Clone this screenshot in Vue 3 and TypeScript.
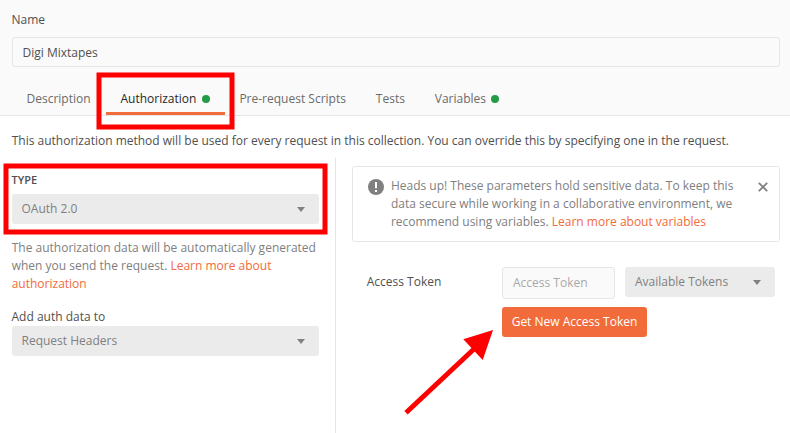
<script setup lang="ts">
import { ref } from 'vue'

interface Tab {
  label: string
  filled?: boolean
}

const tabs: Tab[] = [
  { label: 'Description' },
  { label: 'Authorization', filled: true },
  { label: 'Pre-request Scripts' },
  { label: 'Tests' },
  { label: 'Variables', filled: true },
]
const active = ref('Authorization')
const name = ref('Digi Mixtapes')
const token = ref('')
const showNotice = ref(true)
</script>

<template>
  <div class="page">
    <header class="head">
      <label class="name-label" for="collection-name">Name</label>
      <input id="collection-name" v-model="name" class="input name-input" type="text" />
      <nav class="tabs">
        <button
          v-for="tab in tabs"
          :key="tab.label"
          class="tab"
          :class="{ active: tab.label === active }"
          @click="active = tab.label"
        >
          <span>{{ tab.label }}</span>
          <i v-if="tab.filled" class="dot"></i>
        </button>
      </nav>
    </header>

    <p class="intro">This authorization method will be used for every request in this collection. You can override this by specifying one in the request.</p>

    <main class="body">
      <section class="left">
        <h2 class="type">TYPE</h2>
        <div class="select">
          <span>OAuth 2.0</span>
          <svg class="caret" width="8" height="5" viewBox="0 0 8 5"><path d="M0 0h8L4 5z" /></svg>
        </div>
        <p class="hint">The authorization data will be automatically generated when you send the request. <a>Learn more about authorization</a></p>
        <div class="add-label">Add auth data to</div>
        <div class="select">
          <span>Request Headers</span>
          <svg class="caret" width="8" height="5" viewBox="0 0 8 5"><path d="M0 0h8L4 5z" /></svg>
        </div>
      </section>

      <section class="right">
        <div v-if="showNotice" class="notice">
          <svg class="warn" width="16" height="16" viewBox="0 0 16 16">
            <circle cx="8" cy="8" r="8" fill="#808080" />
            <path d="M7 3h2v6.3H7zM7 11h2v2H7z" fill="#fff" />
          </svg>
          <p class="notice-text">Heads up! These parameters hold sensitive data. To keep this data secure while working in a collaborative environment, we recommend using variables. <a>Learn more about variables</a></p>
          <svg class="close" width="10" height="10" viewBox="0 0 10 10" @click="showNotice = false">
            <path d="M.8.8l8.400 8.400M9.200.8L.8 9.200" fill="none" stroke="#808080" stroke-width="1.8" />
          </svg>
        </div>
        <div class="token">
          <label class="token-label" for="access-token">Access Token</label>
          <div class="token-fields">
            <div class="token-row">
              <input id="access-token" v-model="token" class="input token-input" type="text" placeholder="Access Token" />
              <div class="select available">
                <span>Available Tokens</span>
                <svg class="caret" width="8" height="5" viewBox="0 0 8 5"><path d="M0 0h8L4 5z" /></svg>
              </div>
            </div>
            <button class="primary">Get New Access Token</button>
          </div>
        </div>
      </section>
    </main>

    <svg class="marks" width="790" height="433" viewBox="0 0 790 433">
      <rect x="99" y="75" width="133" height="52" />
      <rect x="6" y="166" width="319" height="66" />
      <path class="shaft" d="M406 412.700L474.500 348.500" />
      <path class="tip" d="M493 330L463.300 339.300L482.700 360z" />
    </svg>
  </div>
</template>

<style>
body {
  margin: 0;
  background: #fff;
}
</style>

<style scoped>
.page {
  position: relative;
  box-sizing: border-box;
  width: 790px;
  height: 433px;
  overflow: hidden;
  display: flex;
  flex-direction: column;
  font: 12px/18px 'Open Sans', sans-serif;
  color: #505050;
  background: #fff;
}
.page * {
  box-sizing: border-box;
}
p,
h2 {
  margin: 0;
}
a {
  color: #f26b3a;
  cursor: pointer;
}
.head {
  display: flex;
  flex-direction: column;
  flex: none;
  height: 116px;
  padding: 11px 10px 0 12px;
  background: #fafafa;
  border-bottom: 1px solid #e6e6e6;
}
.name-label {
  height: 26px;
  text-indent: -0.5px;
}
.input {
  font: inherit;
  color: #505050;
  background: #fafafa;
  border: 1px solid #e6e6e6;
  border-radius: 3px;
  padding: 0 10px 0 9.5px;
  outline: none;
}
.input::placeholder {
  color: #a9a9a9;
  opacity: 1;
}
.name-input {
  width: 768px;
  height: 30px;
}
.tabs {
  display: flex;
  margin-top: 15px;
  height: 33px;
}
.tab {
  display: flex;
  align-items: center;
  gap: 5.5px;
  height: 33px;
  padding: 3px 15.4px 0 14.5px;
  border: 0;
  border-bottom: 3px solid transparent;
  background: none;
  font: inherit;
  color: #6b6b6b;
  white-space: nowrap;
}
.tab.active {
  padding-right: 15px;
  color: #282828;
  border-bottom-color: #f26b3a;
}
.dot {
  width: 8px;
  height: 8px;
  border-radius: 50%;
  background: #249c47;
}
.tab:last-child {
  gap: 5px;
}
.intro {
  flex: none;
  height: 42px;
  padding: 16px 12px 0 11.7px;
}
.body {
  display: flex;
  flex: 1;
}
.left {
  width: 336px;
  padding: 13px 16px 0 12px;
  border-right: 1px solid #e6e6e6;
}
.type {
  height: 23px;
  font-size: 11px;
  line-height: 18px;
  font-weight: 600;
  text-indent: -0.5px;
}
.select {
  display: flex;
  align-items: center;
  justify-content: space-between;
  height: 30px;
  padding: 0 14px 0 9.5px;
  border-radius: 3px;
  background: #ebebeb;
  color: #808080;
}
.caret {
  fill: #808080;
}
.hint {
  margin: 15px 0 0 -0.3px;
  color: #808080;
}
.add-label {
  margin: 15px 0 0 -0.5px;
  height: 18px;
}
.right {
  flex: 1;
  padding: 8px 10px 0 16px;
}
.notice {
  display: flex;
  height: 76px;
  padding: 10px 11px 0 15px;
  border: 1px solid #e6e6e6;
  border-radius: 3px;
  color: #808080;
}
.warn {
  flex: none;
  margin-top: 2px;
}
.notice-text {
  width: 350px;
  margin: 0 auto 0 6.9px;
}
.close {
  flex: none;
  margin-top: 5px;
}
.token {
  display: flex;
  margin: 25px 0 0 14.7px;
}
.token-label {
  width: 135.3px;
  padding-top: 6px;
}
.token-fields {
  display: flex;
  flex-direction: column;
  align-items: flex-start;
  gap: 8px;
}
.token-row {
  display: flex;
  align-items: flex-start;
  gap: 10px;
}
.token-input {
  width: 113px;
  height: 32px;
  padding: 0 10px 2px;
}
.available {
  width: 150px;
  padding-left: 10px;
}
.primary {
  width: 145px;
  height: 30px;
  padding: 0;
  border: 0;
  border-radius: 3px;
  background: #f26b3a;
  color: #fff;
  font: inherit;
}
.marks {
  position: absolute;
  inset: 0;
  pointer-events: none;
}
.marks rect {
  fill: none;
  stroke: #f00;
  stroke-width: 5;
}
.shaft {
  stroke: #f00;
  stroke-width: 5;
}
.tip {
  fill: #f00;
}
</style>
